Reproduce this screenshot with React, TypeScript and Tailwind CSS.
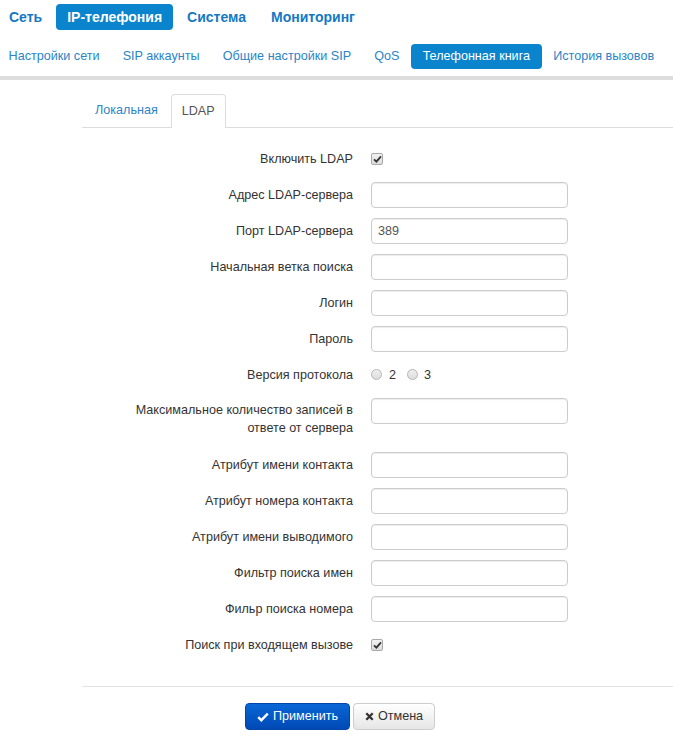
import React from "react";

const mainNav = ["Сеть", "IP-телефония", "Система", "Мониторинг"];
const subNav = [
  "Настройки сети",
  "SIP аккаунты",
  "Общие настройки SIP",
  "QoS",
  "Телефонная книга",
  "История вызовов",
];

function Check() {
  return (
    <span className="inline-flex h-[12px] w-[12px] items-center justify-center rounded-[2px] border border-[#a9a9a9] bg-gradient-to-b from-[#f2f2f2] to-[#dcdcdc]">
      <svg width="9" height="8" viewBox="0 0 9 8">
        <path d="M1 4.3 L3.4 6.6 L8 1.3" fill="none" stroke="#333" strokeWidth="1.8" />
      </svg>
    </span>
  );
}

function Radio() {
  return (
    <span className="inline-block h-[11px] w-[11px] rounded-full border border-[#b5b5b5] bg-gradient-to-b from-[#efefef] to-[#dddddd]" />
  );
}

function Row({
  label,
  children,
}: {
  label: React.ReactNode;
  children: React.ReactNode;
}) {
  return (
    <div className="mb-[10px] flex items-start">
      <div className="ml-[46px] w-[225px] text-right text-[12.6px] leading-[26px] text-[#333]">
        {label}
      </div>
      <div className="ml-[18px] flex h-[26px] items-center">{children}</div>
    </div>
  );
}

function Field({ value = "" }: { value?: string }) {
  return (
    <div className="flex h-[26px] w-[197px] items-center rounded-[4px] border border-[#cccccc] bg-white px-[6px] text-[12.6px] text-[#555] shadow-[inset_0_1px_1px_rgba(0,0,0,0.075)]">
      {value}
    </div>
  );
}

export default function App() {
  return (
    <div className="h-[737px] w-[673px] overflow-hidden bg-white font-['Liberation_Sans',Arial,sans-serif]">
      <div className="ml-[-2px] flex gap-[3px] pt-[4px]">
        {mainNav.map((n) => (
          <div
            key={n}
            className={
              "flex h-[26px] shrink-0 items-center whitespace-nowrap rounded-[4px] px-[11px] text-[14px] font-bold " +
              (n === "IP-телефония" ? "bg-[#0a84cc] text-white" : "text-[#1479c4]")
            }
          >
            {n}
          </div>
        ))}
      </div>
      <div className="ml-[-3px] mt-[14px] flex">
        {subNav.map((n) => (
          <div
            key={n}
            className={
              "flex h-[25px] shrink-0 items-center whitespace-nowrap rounded-[4px] px-[11.6px] text-[12.6px] " +
              (n === "Телефонная книга" ? "bg-[#0a84cc] text-white" : "text-[#2a84c8]")
            }
          >
            {n}
          </div>
        ))}
      </div>
      <div className="mt-[7px] h-[4px] bg-[#dddddd]" />

      <div className="ml-[82px] mt-[14px]">
        <div className="flex h-[34px] border-b border-[#dddddd]">
          <div className="flex h-[33px] items-center px-[13px] text-[12.6px] text-[#2f84c6]">
            Локальная
          </div>
          <div className="mb-[-1px] flex h-[34px] items-center rounded-t-[4px] border border-b-0 border-[#dddddd] bg-white px-[10px] text-[12.6px] text-[#555]">
            LDAP
          </div>
        </div>

        <div className="pt-[18px]">
          <Row label="Включить LDAP">
            <Check />
          </Row>
          <Row label="Адрес LDAP-сервера">
            <Field />
          </Row>
          <Row label="Порт LDAP-сервера">
            <Field value="389" />
          </Row>
          <Row label="Начальная ветка поиска">
            <Field />
          </Row>
          <Row label="Логин">
            <Field />
          </Row>
          <Row label="Пароль">
            <Field />
          </Row>
          <Row label="Версия протокола">
            <div className="flex items-center text-[12.6px] text-[#333]">
              <Radio />
              <span className="ml-[7px]">2</span>
              <span className="ml-[11px] flex">
                <Radio />
              </span>
              <span className="ml-[6px]">3</span>
            </div>
          </Row>
          <div className="mb-[15px] flex items-start">
            <div className="ml-[46px] w-[225px] pt-[3px] text-right text-[12.6px] leading-[18px] text-[#333]">
              Максимальное количество записей в ответе от сервера
            </div>
            <div className="ml-[18px]">
              <Field />
            </div>
          </div>
          <Row label="Атрибут имени контакта">
            <Field />
          </Row>
          <Row label="Атрибут номера контакта">
            <Field />
          </Row>
          <Row label="Атрибут имени выводимого">
            <Field />
          </Row>
          <Row label="Фильтр поиска имен">
            <Field />
          </Row>
          <Row label="Фильр поиска номера">
            <Field />
          </Row>
          <Row label="Поиск при входящем вызове">
            <Check />
          </Row>
        </div>

        <div className="mt-[28px] h-px bg-[#e3e3e3]" />

        <div className="ml-[163px] mt-[16px] flex gap-[3px]">
          <button className="flex h-[27px] w-[105px] items-center justify-center gap-[4px] rounded-[4px] border border-[#0046a8] bg-gradient-to-b from-[#0b67d6] to-[#0049b5] text-[12.6px] text-white">
            <svg width="12" height="10" viewBox="0 0 12 10">
              <path d="M1.2 5.2 L4.3 8.2 L10.8 1.6" fill="none" stroke="#fff" strokeWidth="2.4" />
            </svg>
            Применить
          </button>
          <button className="flex h-[27px] w-[82px] items-center justify-center gap-[4px] rounded-[4px] border border-[#cccccc] bg-gradient-to-b from-[#ffffff] to-[#e6e6e6] text-[12.6px] text-[#333]">
            <svg width="9" height="9" viewBox="0 0 9 9">
              <path d="M1.3 1.3 L7.7 7.7 M7.7 1.3 L1.3 7.7" stroke="#333" strokeWidth="2.3" />
            </svg>
            Отмена
          </button>
        </div>
      </div>
    </div>
  );
}
